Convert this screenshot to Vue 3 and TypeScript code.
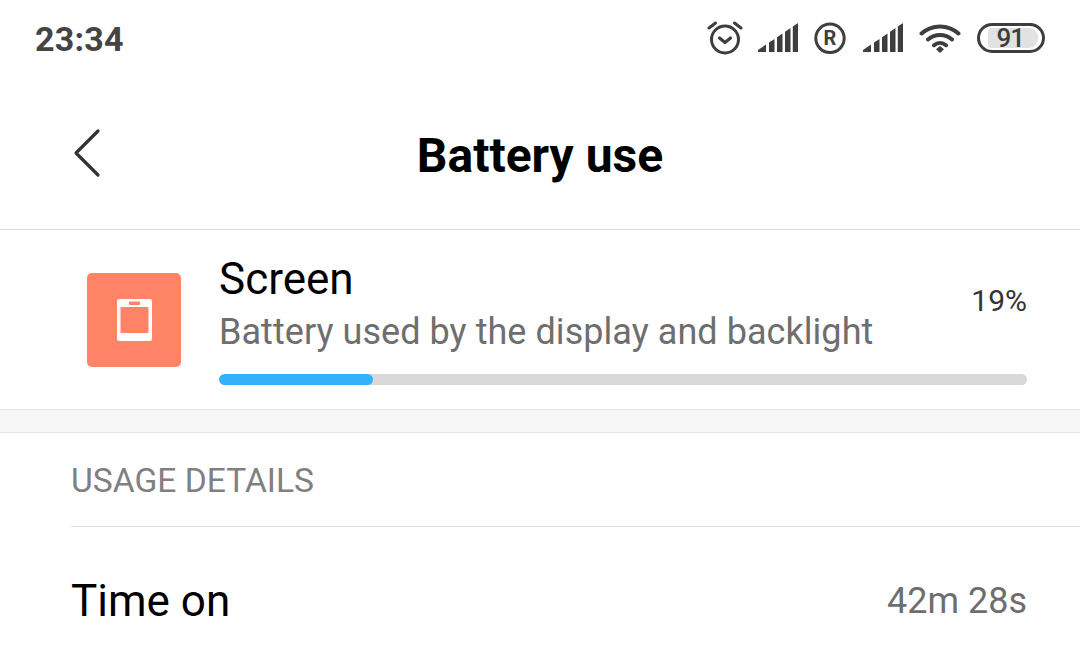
<template>
  <div class="screen">
    <div class="status-bar">
      <span class="clock">23:34</span>
      <div class="status-icons">
        <svg class="ico-alarm" width="36" height="36" viewBox="0 0 36 36">
          <circle cx="18" cy="19.500" r="13.500" fill="none" stroke="#3e3e3e" stroke-width="3" />
          <path d="M12.500 18l5.500 4.500 5.500-4.500" fill="none" stroke="#3e3e3e" stroke-width="3.200" stroke-linecap="round" stroke-linejoin="round" />
          <path d="M2 8l6.500-5M34 8l-6.500-5" fill="none" stroke="#3e3e3e" stroke-width="3" stroke-linecap="round" />
        </svg>
        <svg width="40" height="30" viewBox="0 0 40 30">
          <path v-for="(b, i) in bars" :key="i" :d="b" fill="#3e3e3e" />
        </svg>
        <svg class="ico-r" width="34" height="34" viewBox="0 0 34 34">
          <circle cx="17" cy="17.300" r="14.200" fill="none" stroke="#3e3e3e" stroke-width="3" />
          <text x="17" y="24.200" text-anchor="middle" class="r-mark">R</text>
        </svg>
        <svg width="40" height="30" viewBox="0 0 40 30">
          <path v-for="(b, i) in bars" :key="i" :d="b" fill="#3e3e3e" />
        </svg>
        <svg width="42" height="30" viewBox="0 0 42 30">
          <path d="M2.500 10.500C13 1 29 1 39.500 10.500M9 16.500C16 10.500 26 10.500 33 16.500M15 22.200C18.500 19.300 23.500 19.300 27 22.200" fill="none" stroke="#3e3e3e" stroke-width="4" stroke-linecap="round" />
          <path d="M17 26.300L21 23l4 3.300L21 30z" fill="#3e3e3e" />
        </svg>
        <div class="battery"><div class="battery-fill"><span>91</span></div></div>
      </div>
    </div>

    <header class="title-bar">
      <svg class="back" width="28" height="50" viewBox="0 0 28 50">
        <path d="M25 3L3 25l22 22" fill="none" stroke="#333" stroke-width="3.200" stroke-linecap="round" stroke-linejoin="round" />
      </svg>
      <h1 class="title">Battery use</h1>
    </header>

    <section class="usage-row">
      <div class="app-icon">
        <svg width="35" height="42" viewBox="0 0 35 42">
          <path fill-rule="evenodd" fill="#fff" d="M2 0h31a2 2 0 0 1 2 2v38a2 2 0 0 1-2 2H2a2 2 0 0 1-2-2V2a2 2 0 0 1 2-2zM3.500 8v26h28V8zM12 2.500v2.500a1 1 0 0 0 1 1h9a1 1 0 0 0 1-1V2.500z" />
        </svg>
      </div>
      <div class="usage-body">
        <div class="usage-top">
          <div class="usage-text">
            <div class="usage-name">Screen</div>
            <div class="usage-desc">Battery used by the display and backlight</div>
          </div>
          <span class="usage-pct">{{ percent }}%</span>
        </div>
        <div class="progress"><div class="progress-fill" :style="{ width: percent + '%' }"></div></div>
      </div>
    </section>

    <div class="divider-band"></div>

    <section class="details">
      <div class="details-head">USAGE DETAILS</div>
      <div class="detail-row">
        <span class="detail-label">Time on</span>
        <span class="detail-value">42m 28s</span>
      </div>
    </section>
  </div>
</template>

<script setup lang="ts">
const percent = 19

// wedge plus four bars, tops follow one slanted line
const bars: string[] = [
  'M0 27L8 21.600V29H0z',
  'M11 19.600L16.500 16V29H11z',
  'M19 14.200L24.500 10.500V29H19z',
  'M27 8.800L32.500 5V29H27z',
  'M34.800 3.400L40 0V29H34.800z',
]
</script>

<style>
html,
body {
  margin: 0;
  background: #fff;
}
</style>

<style scoped>
.screen {
  width: 1080px;
  height: 667px;
  overflow: hidden;
  background: #fff;
  font-family: Roboto, "Liberation Sans", sans-serif;
}

.status-bar {
  height: 80px;
  padding: 0 35px;
  box-sizing: border-box;
  display: flex;
  align-items: center;
  justify-content: space-between;
}

.clock {
  font-size: 34px;
  font-weight: 700;
  color: #444;
  letter-spacing: 0.2px;
  margin-bottom: 2px;
}

.status-icons {
  display: flex;
  align-items: center;
  gap: 16px;
  margin-bottom: 4px;
}

.ico-alarm {
  margin-right: -1px;
}

.ico-r {
  margin-left: -1px;
}

.r-mark {
  font-size: 20px;
  font-weight: 700;
  fill: #3e3e3e;
}

.battery {
  width: 68px;
  height: 30px;
  box-sizing: border-box;
  border: 3.500px solid #3e3e3e;
  border-radius: 15px;
  padding: 2px 4px 2px 7.500px;
}

.battery-fill {
  height: 100%;
  background: #e2e2e2;
  border-radius: 3px 9px 9px 3px;
  display: flex;
  align-items: center;
  justify-content: center;
  padding-right: 5px;
  box-sizing: border-box;
}

.battery-fill span {
  font-size: 26px;
  line-height: 1;
  color: #3e3e3e;
  font-weight: 500;
  letter-spacing: -1px;
}

.title-bar {
  position: relative;
  height: 150px;
  box-sizing: border-box;
  border-bottom: 1px solid #d9d9d9;
  display: flex;
  align-items: center;
  justify-content: center;
  padding-top: 3px;
}

.back {
  position: absolute;
  left: 73px;
  top: 48px;
}

.title {
  margin: 0 0 1px;
  font-size: 48px;
  font-weight: 700;
  color: #000;
  line-height: 1;
}

.usage-row {
  height: 179px;
  box-sizing: border-box;
  display: flex;
  align-items: flex-start;
  padding: 43px 53px 0 87px;
  gap: 38px;
}

.app-icon {
  width: 94px;
  height: 94px;
  background: #ff8467;
  border-radius: 5px;
  display: flex;
  align-items: center;
  justify-content: center;
  flex: none;
}

.usage-body {
  flex: 1;
  margin-top: -19px;
}

.usage-top {
  display: flex;
  align-items: center;
  justify-content: space-between;
}

.usage-name {
  font-size: 44px;
  line-height: 50px;
  color: #000;
}

.usage-desc {
  font-size: 36px;
  line-height: 40px;
  margin-top: 8px;
  color: #6e6e6e;
  letter-spacing: 0.05px;
}

.usage-pct {
  font-size: 30px;
  color: #333;
  margin-top: -6px;
}

.progress {
  height: 11px;
  margin-top: 22px;
  border-radius: 6px;
  background: #d8d8d8;
  overflow: hidden;
}

.progress-fill {
  height: 100%;
  border-radius: 6px;
  background: #33b1ff;
}

.divider-band {
  height: 22px;
  background: #f6f6f6;
  border-top: 1px solid #e6e6e6;
  border-bottom: 1px solid #e6e6e6;
}

.details {
  padding-left: 71px;
}

.details-head {
  height: 94px;
  box-sizing: border-box;
  border-bottom: 1px solid #dcdcdc;
  font-size: 33.600px;
  line-height: 95px;
  color: #808080;
}

.detail-row {
  display: flex;
  align-items: center;
  justify-content: space-between;
  height: 148px;
  padding-right: 53px;
}

.detail-label {
  font-size: 44px;
  color: #000;
}

.detail-value {
  font-size: 36px;
  color: #6e6e6e;
}
</style>
